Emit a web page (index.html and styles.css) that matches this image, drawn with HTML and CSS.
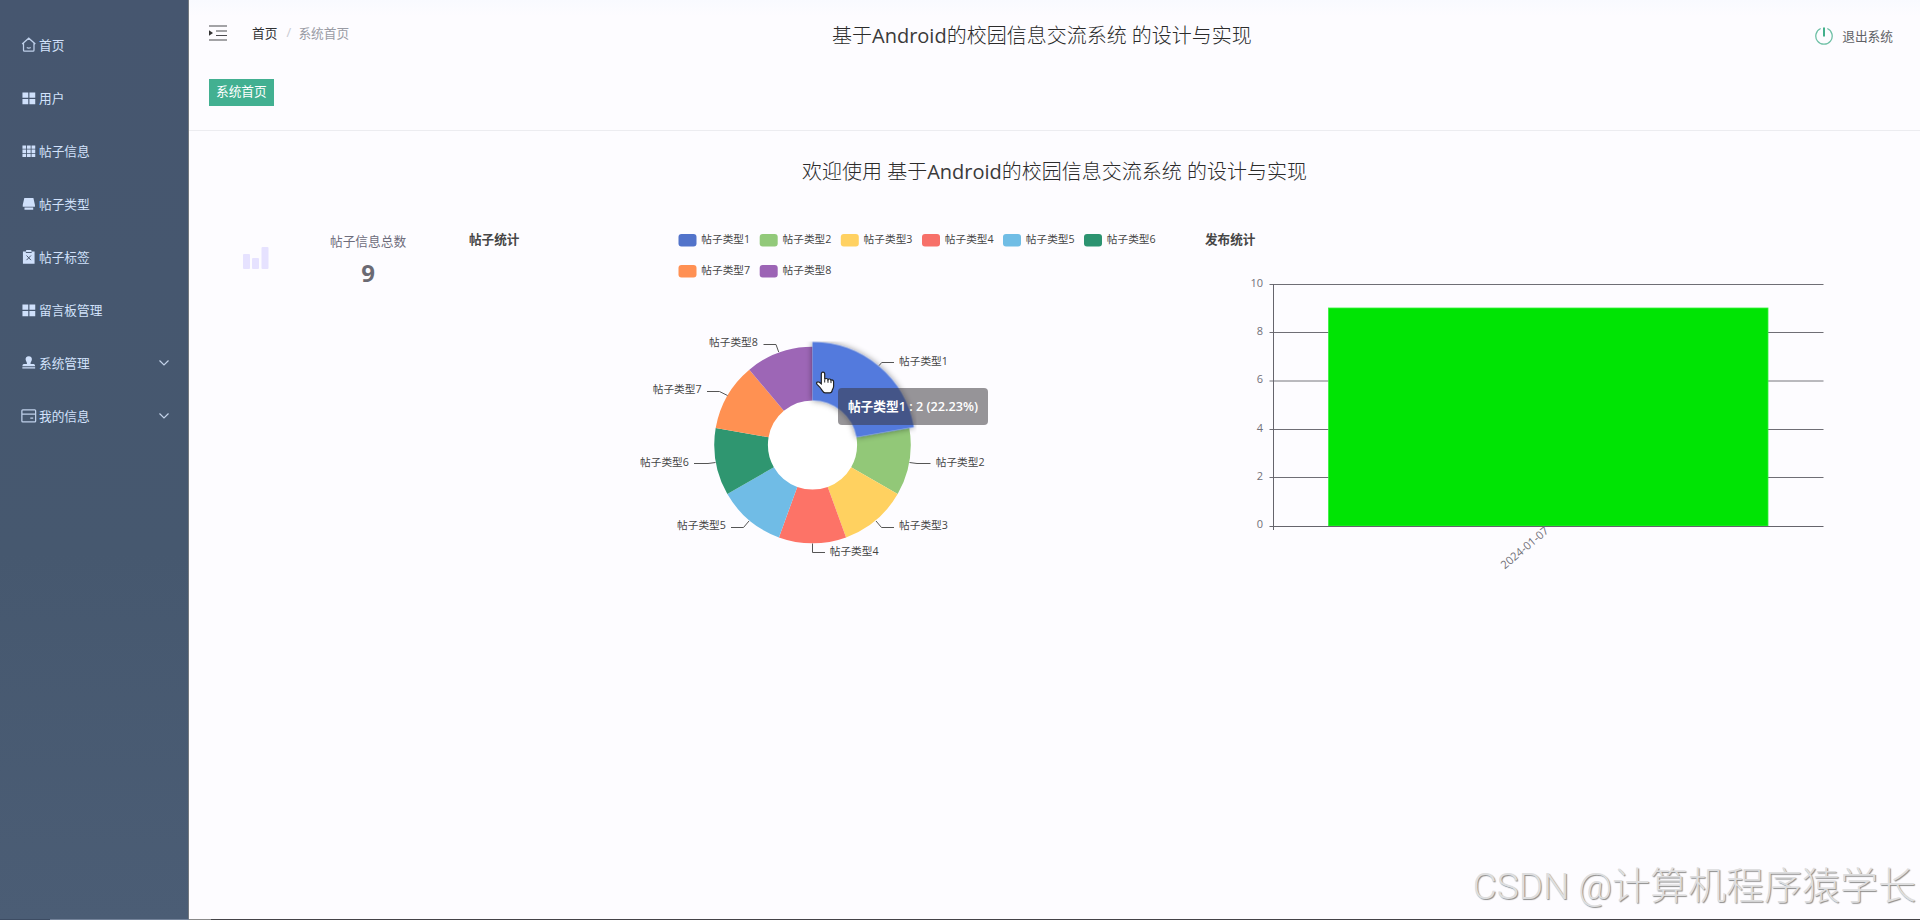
FILE: index.html
```html
<!DOCTYPE html>
<html lang="zh-CN">
<head>
    <meta charset="UTF-8">
    <meta name="viewport" content="width=device-width, initial-scale=1.0">
    <title>基于Android的校园信息交流系统</title>
    <link rel="stylesheet" href="styles.css">
</head>
<body>
    <div class="layout">
        <!-- 侧边菜单 -->
        <nav class="sidebar">
            <a class="menu-item">
                <svg class="menu-icon" viewBox="0 0 16 16"><path class="line" d="M1.2 7.2 8 1.2l6.8 6M2.6 6.2v7.4q0 1 1 1h8.8q1 0 1-1V6.2M6 10.8q2 1.4 4 0"/></svg>
                <span>首页</span>
            </a>
            <a class="menu-item">
                <svg class="menu-icon" viewBox="0 0 16 16"><path d="M1.5 2.5h6v5.4h-6zM8.7 2.5h6v5.4h-6zM1.5 9.2h6v5.4h-6zM8.7 9.2h6v5.4h-6z"/></svg>
                <span>用户</span>
            </a>
            <a class="menu-item">
                <svg class="menu-icon" viewBox="0 0 16 16"><path d="M1.5 2.5h3.8v3.4H1.5zM6.2 2.5H10v3.4H6.2zM10.9 2.5h3.8v3.4h-3.8zM1.5 6.8h3.8v3.4H1.5zM6.2 6.8H10v3.4H6.2zM10.9 6.8h3.8v3.4h-3.8zM1.5 11.1h3.8v3.4H1.5zM6.2 11.1H10v3.4H6.2zM10.9 11.1h3.8v3.4h-3.8z"/></svg>
                <span>帖子信息</span>
            </a>
            <a class="menu-item">
                <svg class="menu-icon" viewBox="0 0 16 16"><path d="M3.4 2h9.4l1.6 7.4v1.8H1.8V9.4zM3.6 11.8h9v2.4h-9z"/></svg>
                <span>帖子类型</span>
            </a>
            <a class="menu-item">
                <svg class="menu-icon" viewBox="0 0 16 16"><path d="M2 2.5h3.3V1h5.4v1.5H14v12.7H2z"/><path class="cut" d="M5.7 6.7l4.6 4.8M10.3 6.7l-4.6 4.8M5 3.6h6"/></svg>
                <span>帖子标签</span>
            </a>
            <a class="menu-item">
                <svg class="menu-icon" viewBox="0 0 16 16"><path d="M1.5 2.5h6v5.4h-6zM8.7 2.5h6v5.4h-6zM1.5 9.2h6v5.4h-6zM8.7 9.2h6v5.4h-6z"/></svg>
                <span>留言板管理</span>
            </a>
            <a class="menu-item">
                <svg class="menu-icon" viewBox="0 0 16 16"><path d="M8 1.4c2.3 0 3.6 1.6 3.2 3.6-.4 1.8-1.4 2.4-1.4 4.2h3.4q1.4.2 1.4 2.4H1.4q0-2.2 1.4-2.4h3.4c0-1.8-1-2.4-1.4-4.2C4.4 3 5.7 1.4 8 1.4zM1.4 12.7h13.2V14H1.4z"/></svg>
                <span>系统管理</span>
                <svg class="arrow" viewBox="0 0 12 12"><path d="M1.5 3.5 6 8l4.5-4.5"/></svg>
            </a>
            <a class="menu-item">
                <svg class="menu-icon" viewBox="0 0 16 16"><path class="line" d="M1.8 2h12.4q.9 0 .9.9v10.6q0 .9-.9.9H1.8q-.9 0-.9-.9V2.9q0-.9.9-.9zM1 6.3h14M9.6 10.4h3"/></svg>
                <span>我的信息</span>
                <svg class="arrow" viewBox="0 0 12 12"><path d="M1.5 3.5 6 8l4.5-4.5"/></svg>
            </a>
        </nav>

        <main class="main">
            <header class="header">
                <div class="top-bar">
                    <div class="top-left">
                        <svg class="fold-icon" viewBox="0 0 18 16"><path class="fold-line" d="M0 1h18M7 6h11M7 10.5h11M0 15h18"/><path d="M0 5.2v5.6L4 8z"/></svg>
                        <div class="breadcrumb">
                            <span class="crumb-home">首页</span>
                            <span class="crumb-sep">/</span>
                            <span>系统首页</span>
                        </div>
                    </div>
                    <h1 class="title">基于<span class="latin">Android</span>的校园信息交流系统 的设计与实现</h1>
                    <div class="logout">
                        <svg class="power-icon" viewBox="0 0 18 18"><path d="M5.7 1.5a8.2 8.2 0 1 0 6.6 0"/><path class="power-bar" d="M9 .5v9"/></svg>
                        <span>退出系统</span>
                    </div>
                </div>
                <div class="tabs"><span class="tab">系统首页</span></div>
            </header>

            <section class="content">
                <h2 class="title welcome">欢迎使用 基于<span class="latin">Android</span>的校园信息交流系统 的设计与实现</h2>

                <div class="cards">
                    <div class="stat">
                        <svg class="stat-icon" viewBox="0 0 26 22"><rect x="0" y="7" width="7" height="15" rx="1"/><rect x="9" y="11" width="7" height="11" rx="1"/><rect x="18.5" y="0" width="7" height="22" rx="1"/></svg>
                        <div class="stat-text">
                            <div class="stat-name">帖子信息总数</div>
                            <div class="stat-num">9</div>
                        </div>
                    </div>

                    <!-- 帖子统计 饼图 -->
                    <div class="chart">
                        <svg class="pie" width="736" height="380" viewBox="469 220 736 380">
                            <defs>
                                <filter id="shadow" x="-20%" y="-20%" width="140%" height="140%">
                                    <feDropShadow dx="0" dy="0" stdDeviation="3" flood-color="#000" flood-opacity="0.45"/>
                                </filter>
                            </defs>
                            <text class="chart-title" x="469" y="243.5">帖子统计</text>

                            <g class="legend">
                                <rect class="c1" x="678.5" y="234" width="18" height="12.5" rx="3"/><text x="701.3" y="243">帖子类型1</text>
                                <rect class="c2" x="759.7" y="234" width="18" height="12.5" rx="3"/><text x="782.5" y="243">帖子类型2</text>
                                <rect class="c3" x="840.8" y="234" width="18" height="12.5" rx="3"/><text x="863.6" y="243">帖子类型3</text>
                                <rect class="c4" x="922" y="234" width="18" height="12.5" rx="3"/><text x="944.8" y="243">帖子类型4</text>
                                <rect class="c5" x="1003" y="234" width="18" height="12.5" rx="3"/><text x="1025.8" y="243">帖子类型5</text>
                                <rect class="c6" x="1084" y="234" width="18" height="12.5" rx="3"/><text x="1106.8" y="243">帖子类型6</text>
                                <rect class="c7" x="678.5" y="265" width="18" height="12.5" rx="3"/><text x="701.3" y="274">帖子类型7</text>
                                <rect class="c8" x="759.7" y="265" width="18" height="12.5" rx="3"/><text x="782.5" y="274">帖子类型8</text>
                            </g>

                            <circle class="hole" cx="812.5" cy="445" r="46"/>
                            <!-- 圆周分成 9 份 -->
                            <g class="ring" transform="rotate(-90 812.5 445)">
                                <circle class="s2" cx="812.5" cy="445" r="71.45" pathLength="9" stroke-dasharray="1 8" stroke-dashoffset="-2"/>
                                <circle class="s3" cx="812.5" cy="445" r="71.45" pathLength="9" stroke-dasharray="1 8" stroke-dashoffset="-3"/>
                                <circle class="s4" cx="812.5" cy="445" r="71.45" pathLength="9" stroke-dasharray="1 8" stroke-dashoffset="-4"/>
                                <circle class="s5" cx="812.5" cy="445" r="71.45" pathLength="9" stroke-dasharray="1 8" stroke-dashoffset="-5"/>
                                <circle class="s6" cx="812.5" cy="445" r="71.45" pathLength="9" stroke-dasharray="1 8" stroke-dashoffset="-6"/>
                                <circle class="s7" cx="812.5" cy="445" r="71.45" pathLength="9" stroke-dasharray="1 8" stroke-dashoffset="-7"/>
                                <circle class="s8" cx="812.5" cy="445" r="71.45" pathLength="9" stroke-dasharray="1 8" stroke-dashoffset="-8"/>
                                <circle class="s1" cx="812.5" cy="445" r="73.8" pathLength="9" stroke-dasharray="2 7" filter="url(#shadow)"/>
                            </g>

                            <path class="leader" d="M879 365.7 881.7 362.5H894M909.5 462.5 917 463.5H930.5M876 521 881.5 527.5H894M812.5 543.5V552.5H825M749 521 743.5 527.5H731M715.5 462.5 708 463.5H694M727.5 395.5 719.5 391.5H707M778.7 352 776 344.5H763.5"/>
                            <g class="labels">
                                <text x="899" y="364.5">帖子类型1</text>
                                <text x="935.7" y="466">帖子类型2</text>
                                <text x="899" y="529">帖子类型3</text>
                                <text x="829.7" y="554.5">帖子类型4</text>
                                <text x="677" y="529">帖子类型5</text>
                                <text x="640" y="466">帖子类型6</text>
                                <text x="652.7" y="393">帖子类型7</text>
                                <text x="709" y="346">帖子类型8</text>
                            </g>
                            <g transform="translate(815.5 371)">
                                <path class="hand" d="M7.5 1.2c1.3 0 1.7.9 1.7 2v5.2c.4-1.3 3-1.2 3.3.3.6-1.1 2.8-.9 3 .6.9-.8 2.6-.2 2.6 1.4v4.6c0 2.2-1.3 3-1.5 4.3-.2 1.5-1 2.2-2.4 2.2H9.6c-1.6 0-2-.9-2.8-2.2-1.3-2.2-3.5-4.6-5.2-6.2-1.5-1.5.4-3.4 2.2-2.2l2 1.5V3.2c0-1.1.4-2 1.7-2z"/>
                                <path class="hand-line" d="M9.2 8.5v3M12.5 8.8v3M15.5 9.6v2.5"/>
                            </g>
                        </svg>
                        <div class="tooltip">帖子类型1 : 2 (22.23%)</div>
                    </div>

                    <!-- 发布统计 柱状图 -->
                    <svg class="bar-chart" width="680" height="380" viewBox="1205 220 680 380">
                        <text class="chart-title" x="1205" y="243.5">发布统计</text>
                        <path class="grid-line" d="M1269.5 284.5H1823.5M1269.5 332.5H1823.5M1269.5 429.5H1823.5M1269.5 477.5H1823.5"/>
                        <path class="grid-line faint" d="M1269.5 381H1823.5"/>
                        <rect class="bar" x="1328.5" y="308" width="439.5" height="218"/>
                        <path class="axis" d="M1273.5 284V530M1269.5 526.5H1823.5"/>
                        <g class="ticks">
                            <text x="1263" y="287">10</text>
                            <text x="1263" y="335">8</text>
                            <text x="1263" y="383">6</text>
                            <text x="1263" y="432">4</text>
                            <text x="1263" y="480">2</text>
                            <text x="1263" y="528">0</text>
                            <text class="date" transform="translate(1549.5 532) rotate(-40)">2024-01-07</text>
                        </g>
                    </svg>
                </div>
            </section>
        </main>
    </div>

    <div class="watermark"><span class="mark-latin">CSDN @</span>计算机程序猿学长</div>
    <div class="bottom-edge"></div>
</body>
</html>
```

FILE: styles.css
```css
/* 全局 */
body {
    margin: 0;
    font-family: "Open Sans", "Noto Sans CJK SC", sans-serif;
    font-size: 12.7px;
    color: #333;
    background: #fdfcff;
    overflow: hidden;
}

.layout {
    display: flex;
    height: 920px;
}

/* 侧边栏 */
.sidebar {
    width: 189px;
    flex: none;
    padding-top: 18px;
    box-sizing: border-box;
    background: linear-gradient(#46566f, #46586f 60%, #4b5d75);
    border-right: 1px solid #74797f;
}

.menu-item {
    display: flex;
    align-items: center;
    height: 53px;
    padding: 0 18px 0 21px;
    color: #d2e2fb;
}

.menu-icon {
    width: 15.5px;
    height: 15.5px;
    margin: 1px 2.5px 0 0;
    fill: #cfe0fb;
}

.menu-icon .line {
    fill: none;
    stroke: #bfd0ea;
    stroke-width: 1.3;
}

.menu-icon .cut {
    fill: none;
    stroke: #46566f;
    stroke-width: 1;
}

.arrow {
    width: 12px;
    height: 12px;
    margin-left: auto;
    fill: none;
    stroke: #c3d2e8;
    stroke-width: 1.2;
}

/* 顶部 */
.main {
    flex: 1;
}

.header {
    height: 130px;
    border-bottom: 1px solid #ececf0;
    background: linear-gradient(#f9faff, #fdfcff 16px);
}

.top-bar {
    display: grid;
    grid-template-columns: 623px 430px 1fr;
    padding: 0 27px 0 20px;
    height: 71px;
    align-items: center;
}

.top-left {
    display: flex;
    align-items: center;
    padding-bottom: 6px;
}

.fold-icon {
    width: 18px;
    height: 16px;
    margin: 0 25px 0 0;
    fill: #333;
}

.fold-line {
    stroke: #4a4a4e;
    stroke-width: 1.2;
}

.breadcrumb {
    display: flex;
    gap: 9px;
    color: #999ba4;
}

.crumb-home {
    color: #303133;
}

.crumb-sep {
    width: 3px;
    color: #c8cad2;
}

.title {
    margin: 0;
    font-size: 20px;
    font-weight: 300;
    line-height: 28px;
    white-space: nowrap;
    color: #2b2b2b;
}

.latin {
    font-weight: 400;
    color: #3a3a3a;
}

.logout {
    display: flex;
    align-items: center;
    justify-content: flex-end;
    gap: 9px;
    color: #606166;
}

.power-icon {
    width: 18px;
    height: 18px;
    fill: none;
    stroke: #6fc0a6;
    stroke-width: 1.3;
}

.power-bar {
    stroke: #43b08c;
    stroke-width: 2;
}

.tabs {
    padding: 8px 20px 0;
}

.tab {
    display: inline-block;
    height: 27px;
    padding: 0 7px;
    line-height: 25px;
    color: #fff;
    background: #42b091;
}

/* 内容 */
.content {
    padding: 27px 35px 0 20px;
}

.welcome {
    padding-left: 593px;
}

.cards {
    display: flex;
    margin-top: 34px;
}

.stat {
    display: flex;
    width: 226px;
    padding-left: 34px;
    flex: none;
}

.stat-icon {
    width: 26px;
    height: 22px;
    margin: 27px 61px 0 0;
    fill: #e6e2ff;
}

.stat-text {
    padding-top: 11px;
    text-align: center;
    color: #6d6c7c;
}

.stat-name {
    line-height: 20px;
}

.stat-num {
    font-size: 24px;
    font-weight: 700;
    line-height: 44px;
    color: #6b6a73;
}

.chart {
    position: relative;
    flex: none;
    height: 380px;
}

.chart-title {
    font-size: 12.6px;
    font-weight: 700;
    fill: #464646;
}

.legend text,
.labels text {
    font-size: 10.7px;
    fill: #444;
}

.c1 { fill: #5273ca; }
.c2 { fill: #92c97a; }
.c3 { fill: #ffd162; }
.c4 { fill: #f77069; }
.c5 { fill: #70bde5; }
.c6 { fill: #2c9370; }
.c7 { fill: #ff9053; }
.c8 { fill: #9c64b5; }

.hole {
    fill: #fff;
}

.ring circle {
    fill: none;
    stroke-width: 53.7;
}

.ring .s1 { stroke: #527add; stroke-width: 58.4; }
.ring .s2 { stroke: #92c878; }
.ring .s3 { stroke: #ffd160; }
.ring .s4 { stroke: #fd7367; }
.ring .s5 { stroke: #70bce6; }
.ring .s6 { stroke: #2f9670; }
.ring .s7 { stroke: #ff9152; }
.ring .s8 { stroke: #9d66b6; }

.leader {
    fill: none;
    stroke: #555;
    stroke-width: 1;
}

.hand {
    fill: #fff;
    stroke: #222;
    stroke-width: 1.2;
}

.hand-line {
    stroke: #222;
    stroke-width: 1;
}

.tooltip {
    position: absolute;
    left: 369px;
    top: 168px;
    width: 150px;
    height: 37px;
    line-height: 36px;
    text-align: center;
    font-size: 12.7px;
    font-weight: 600;
    color: #fff;
    white-space: nowrap;
    border-radius: 4px;
    background: rgba(55, 52, 58, 0.52);
}

.bar-chart {
    flex: none;
}

.grid-line {
    stroke: #6f6e75;
}

.faint {
    stroke: #77767c;
}

.axis {
    fill: none;
    stroke: #65646c;
}

.bar {
    fill: #00e404;
    stroke: #35f23c;
    stroke-width: 0.8;
}

.ticks text {
    font-size: 11px;
    text-anchor: end;
    fill: #717078;
}

.ticks .date {
    font-size: 11.2px;
}

/* 水印 */
.watermark {
    position: absolute;
    right: 4px;
    bottom: 5px;
    font-family: "Noto Sans CJK SC", sans-serif;
    font-size: 38px;
    font-weight: 300;
    line-height: 56px;
    white-space: nowrap;
    color: #dededf;
    text-shadow: 1px 1px 1px #8c8c8c;
}

.mark-latin {
    font-family: Roboto, sans-serif;
    font-size: 37px;
}

.bottom-edge {
    position: absolute;
    left: 0;
    bottom: 0;
    width: 100%;
    height: 1px;
    background: linear-gradient(90deg, #3d4c63 50px, #74839a 50px, #74839a 189px, #8a8a8a 189px, #8a8a8a 211px, #444347 211px);
}
```
